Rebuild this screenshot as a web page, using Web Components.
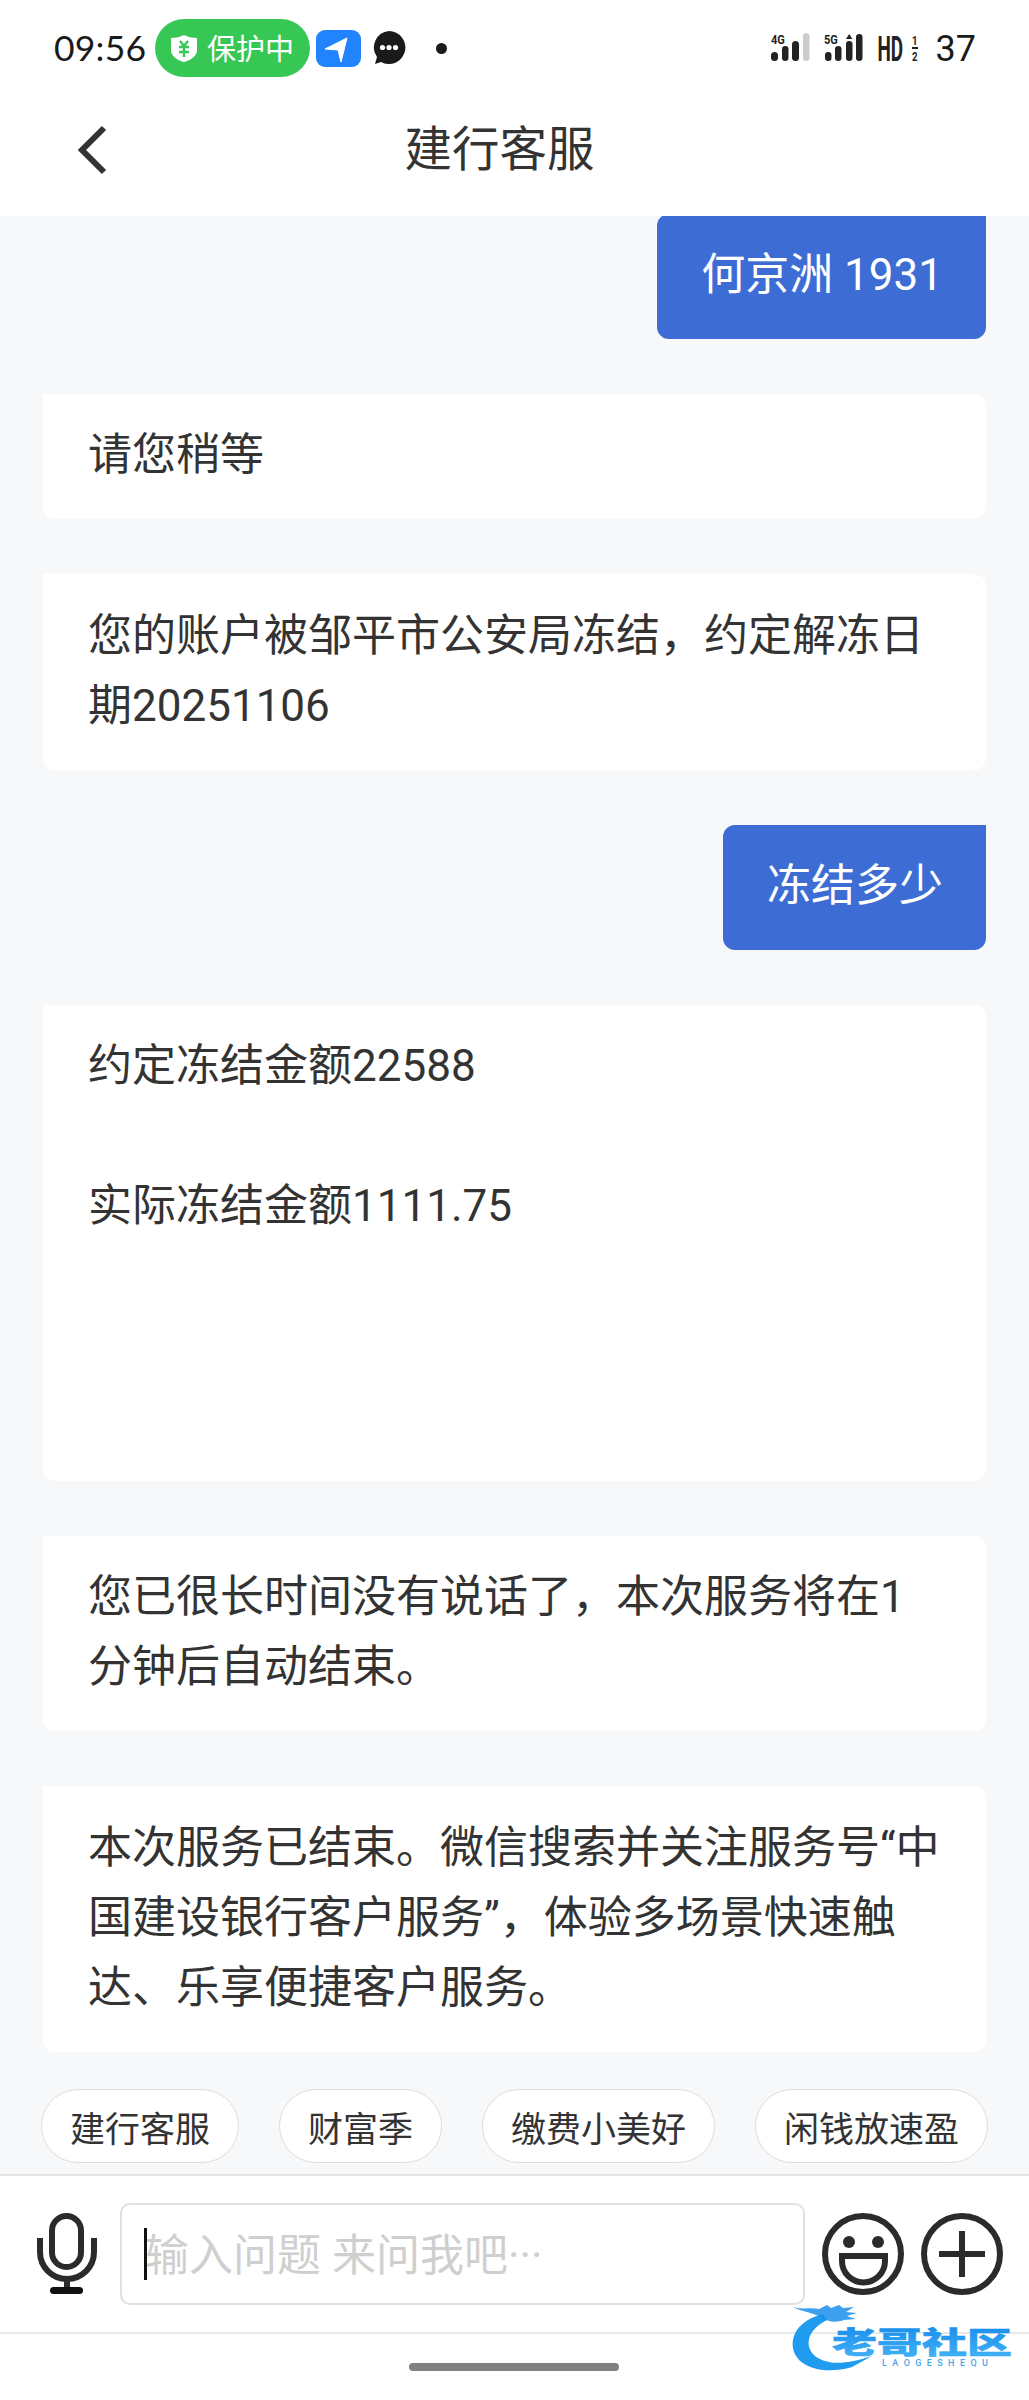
<!DOCTYPE html>
<html lang="zh-CN">
<head>
<meta charset="utf-8">
<title>建行客服</title>
<style>
  html, body { margin: 0; padding: 0; }
  body {
    width: 1029px;
    height: 2400px;
    background: #fff;
    font-family: "Roboto", "Noto Sans CJK SC", sans-serif;
    color: #333;
  }
  chat-app { height: 2400px; }
</style>
</head>
<body>
<chat-app>
  <status-bar slot="top"></status-bar>
  <nav-bar slot="top">建行客服</nav-bar>
  <chat-bubble mine style="margin-top:-2.4px">何京洲 1931</chat-bubble>
  <chat-bubble>请您稍等</chat-bubble>
  <chat-bubble>您的账户被邹平市公安局冻结，约定解冻日期20251106</chat-bubble>
  <chat-bubble mine>冻结多少</chat-bubble>
  <chat-bubble tall>约定冻结金额22588<br><br>实际冻结金额1111.75</chat-bubble>
  <chat-bubble>您已很长时间没有说话了，本次服务将在1分钟后自动结束。</chat-bubble>
  <chat-bubble>本次服务已结束。微信搜索并关注服务号“中国建设银行客户服务”，体验多场景快速触达、乐享便捷客户服务。</chat-bubble>
  <quick-tags slot="bottom"></quick-tags>
  <input-bar slot="bottom"></input-bar>
  <home-bar slot="bottom"></home-bar>
</chat-app>

<script>
const CJK = '"Roboto", "Noto Sans CJK SC", sans-serif';

class ChatApp extends HTMLElement {
  constructor() {
    super();
    this.attachShadow({ mode: 'open' }).innerHTML = `
      <style>
        :host { display: flex; flex-direction: column; width: 1029px; background: #f7f8fa; overflow: hidden; }
        main { flex: 1; min-height: 0; display: flex; flex-direction: column; gap: 55px; padding: 0 43px; overflow: hidden; }
      </style>
      <slot name="top"></slot>
      <main><slot></slot></main>
      <slot name="bottom"></slot>
    `;
  }
}

class StatusBar extends HTMLElement {
  constructor() {
    super();
    this.attachShadow({ mode: 'open' }).innerHTML = `
      <style>
        :host { display: flex; align-items: center; height: 96px; box-sizing: border-box; padding: 0 53px 0 54px; background: #fff; color: #1a1a1a; font-family: ${CJK}; }
        .time { font-family: "Lato", sans-serif; font-size: 35.5px; letter-spacing: .2px; width: 101px; flex: none; margin-top: -2px; }
        .pill { display: flex; align-items: center; gap: 10px; flex: none; width: 155px; height: 58px; box-sizing: border-box; padding-left: 16px; border-radius: 29px; background: #37c755; color: #fff; font-size: 29px; }
        .pill span { margin-top: -2px; }
        svg { display: block; flex: none; }
        .loc { margin-left: 6px; }
        .msg { margin-left: 11px; }
        .dot { width: 11px; height: 11px; margin-left: 30px; border-radius: 50%; background: #1a1a1a; }
        .right { margin-left: auto; display: flex; align-items: center; }
        .bat { font-size: 36px; margin-left: 18px; margin-top: 2px; }
      </style>
      <span class="time">09:56</span>
      <div class="pill">
        <svg width="26" height="27" viewBox="0 0 26 27">
          <path d="M13 0c4 2 8 3 13 3v12c0 6-6 10-13 12C6 25 0 21 0 15V3c5 0 9-1 13-3z" fill="#fff"/>
          <path d="M9 6l4 5 4-5M8 12h10M8 17h10M13 11v11" fill="none" stroke="#37c755" stroke-width="2.4"/>
        </svg>
        <span>保护中</span>
      </div>
      <svg class="loc" width="45" height="37" viewBox="0 0 45 37">
        <rect width="45" height="37" rx="9" fill="#2183fd"/>
        <path d="M9 19L31 8l-6 24-3-12z" fill="#fff" stroke="#fff" stroke-width="1" stroke-linejoin="round"/>
      </svg>
      <svg class="msg" width="34" height="34" viewBox="0 0 34 34">
        <path d="M17 0a16.5 16.5 0 1 1-8 31l-6 2 2-7A16.5 16.5 0 0 1 17 0z" fill="#1a1a1a"/>
        <circle cx="10.5" cy="16.5" r="2.6" fill="#fff"/><circle cx="17" cy="16.5" r="2.6" fill="#fff"/><circle cx="23.5" cy="16.5" r="2.6" fill="#fff"/>
      </svg>
      <span class="dot"></span>
      <div class="right">
        <svg width="148" height="44" viewBox="0 -6 148 44">
          <text transform="translate(1 12) scale(.85 1)" font-size="13" font-weight="700" font-family="Roboto" fill="#222">4G</text>
          <rect x="1" y="20" width="7" height="9" rx="3.5" fill="#222"/>
          <rect x="12" y="14" width="6.5" height="15" rx="3.2" fill="#222"/>
          <rect x="22" y="9" width="7" height="20" rx="3.5" fill="#222"/>
          <rect x="33" y="1" width="6.5" height="28" rx="3.2" fill="#ccc"/>
          <text transform="translate(54 12) scale(.85 1)" font-size="13" font-weight="700" font-family="Roboto" fill="#222">5G</text>
          <rect x="55" y="20" width="6.5" height="9" rx="3.2" fill="#222"/>
          <rect x="65" y="14" width="6.5" height="15" rx="3.2" fill="#222"/>
          <rect x="76" y="9" width="6.5" height="20" rx="3.2" fill="#222"/>
          <path d="M76 7l3.2-5 3.2 5z" fill="#222"/>
          <rect x="86" y="2" width="6.5" height="27" rx="3.2" fill="#222"/>
          <text transform="translate(107.5 29) scale(.54 1)" font-size="35" font-weight="700" font-family="Roboto" fill="#222">HD</text>
          <text transform="translate(142 13) scale(.8 1)" font-size="12" font-weight="700" font-family="Roboto" fill="#222">1</text>
          <rect x="142" y="15" width="6" height="2" fill="#222"/>
          <text transform="translate(142 29) scale(.8 1)" font-size="12" font-weight="700" font-family="Roboto" fill="#222">2</text>
        </svg>
        <span class="bat">37</span>
      </div>
    `;
  }
}

class NavBar extends HTMLElement {
  constructor() {
    super();
    this.attachShadow({ mode: 'open' }).innerHTML = `
      <style>
        :host { display: block; position: relative; height: 120px; background: #fff; }
        .title { display: block; text-align: center; padding-right: 30px; font-size: 47.5px; line-height: 108px; color: #333; font-family: ${CJK}; }
        svg { position: absolute; left: 76px; top: 29px; }
      </style>
      <svg width="32" height="50" viewBox="0 0 32 50"><path d="M28 3L6 25l22 22" fill="none" stroke="#333" stroke-width="6"/></svg>
      <span class="title"><slot></slot></span>
    `;
  }
}

class ChatBubble extends HTMLElement {
  constructor() {
    super();
    this.attachShadow({ mode: 'open' }).innerHTML = `
      <style>
        :host { display: block; flex: none; box-sizing: border-box; background: #fff; color: #333; border-radius: 0 12px 12px 12px; padding: 26.2px 40px 29.2px 45px; font-size: 44px; line-height: 70px; font-family: ${CJK}; }
        :host([mine]) { align-self: flex-end; background: #3d6dd4; color: #fff; border-radius: 12px 0 12px 12px; padding: 26.2px 43px 29.2px 44px; }
        :host([tall]) { height: 476px; }
      </style>
      <slot></slot>
    `;
  }
}

class QuickTags extends HTMLElement {
  constructor() {
    super();
    const tags = ['建行客服', '财富季', '缴费小美好', '闲钱放速盈'];
    this.attachShadow({ mode: 'open' }).innerHTML = `
      <style>
        :host { display: flex; justify-content: space-between; align-items: flex-start; height: 85px; box-sizing: border-box; padding: 0 41px; background: #f7f8fa; }
        span { display: flex; align-items: center; height: 74px; box-sizing: border-box; padding: 0 28px; border: 1px solid #ddd; border-radius: 37px; background: #fff; color: #333; font-size: 35px; font-family: ${CJK}; }
      </style>
      ${tags.map(t => `<span>${t}</span>`).join('')}
    `;
  }
}

class InputBar extends HTMLElement {
  constructor() {
    super();
    this.attachShadow({ mode: 'open' }).innerHTML = `
      <style>
        :host { display: flex; align-items: center; height: 160px; box-sizing: border-box; padding: 0 26px 0 37px; background: #fff; border-top: 2px solid #e4e2e2; border-bottom: 2px solid #e8e8e8; }
        svg { display: block; flex: none; }
        .box { position: relative; flex: none; width: 685px; height: 102px; margin-left: 23px; box-sizing: border-box; border: 2px solid #e2dfdf; border-radius: 10px; padding: 0 0 4px 23px; display: flex; align-items: center; color: #cfcfcf; font-size: 44px; font-family: ${CJK}; }
        .box::before { content: ""; position: absolute; left: 22px; top: 23px; width: 3px; height: 52px; background: #111; }
        .smile { margin-left: 17px; }
        .plus { margin-left: 17px; }
      </style>
      <svg width="60" height="82" viewBox="0 0 60 82">
        <rect x="15" y="3" width="29" height="51" rx="14.5" fill="none" stroke="#2b2b2b" stroke-width="6"/>
        <path d="M3 25v14a27 27 0 0 0 54 0V25" fill="none" stroke="#2b2b2b" stroke-width="6"/>
        <path d="M30 66v12" stroke="#2b2b2b" stroke-width="6"/>
        <rect x="13" y="74" width="33" height="7" rx="3.5" fill="#111"/>
      </svg>
      <div class="box">输入问题 来问我吧···</div>
      <svg class="smile" width="82" height="82" viewBox="0 0 82 82" style="margin-top:-1px">
        <circle cx="41" cy="41" r="38" fill="none" stroke="#2b2b2b" stroke-width="6"/>
        <circle cx="27" cy="29" r="6" fill="#2b2b2b"/><circle cx="56" cy="29" r="6" fill="#2b2b2b"/>
        <path d="M20 43h43v5a21.5 21.5 0 0 1-43 0z" fill="none" stroke="#2b2b2b" stroke-width="6"/>
      </svg>
      <svg class="plus" width="82" height="82" viewBox="0 0 82 82" style="margin-top:-1px">
        <circle cx="41" cy="41" r="38" fill="none" stroke="#2b2b2b" stroke-width="6"/>
        <path d="M18 41h46M41 18v46" fill="none" stroke="#2b2b2b" stroke-width="6"/>
      </svg>
    `;
  }
}

class HomeBar extends HTMLElement {
  constructor() {
    super();
    this.attachShadow({ mode: 'open' }).innerHTML = `
      <style>
        :host { display: block; position: relative; height: 66px; background: #fff; }
        .handle { position: absolute; left: 409px; top: 29px; width: 210px; height: 8px; border-radius: 4px; background: #808080; }
        svg { position: absolute; left: 785px; top: -34px; overflow: visible; }
      </style>
      <span class="handle"></span>
      <svg width="235" height="80" viewBox="0 0 235 80">
        <defs><linearGradient id="g" x1="0" y1="0" x2="0" y2="1"><stop offset="0" stop-color="#0f86ea"/><stop offset="1" stop-color="#45b4f6"/></linearGradient></defs>
        <path d="M38 14C14 20 4 36 9 52c7 18 34 22 58 15l20-11c-24 8-44 10-57 0C19 46 22 30 42 20z" fill="#1f9bf0"/>
        <path d="M8 7c10 3 18 0 26 2l8-4 4 3 8-3 4 3 11-1-8 5 11 1-10 3 9 3-12 1c-8 3-16 2-24-3-8-5-18-5-27-10z" fill="#1a8fec" opacity=".85"/>
        <text transform="translate(47 52.5) scale(1 .65)" font-size="45" font-weight="900" font-family="Noto Sans CJK SC" fill="url(#g)" stroke="url(#g)" stroke-width=".8">老哥社区</text>
        <text x="97" y="66" font-size="9" font-weight="500" font-family="Roboto" fill="#4aa6e8" letter-spacing="5.4">LAOGESHEQU</text>
      </svg>
    `;
  }
}

customElements.define('chat-app', ChatApp);
customElements.define('status-bar', StatusBar);
customElements.define('nav-bar', NavBar);
customElements.define('chat-bubble', ChatBubble);
customElements.define('quick-tags', QuickTags);
customElements.define('input-bar', InputBar);
customElements.define('home-bar', HomeBar);
</script>
</body>
</html>
